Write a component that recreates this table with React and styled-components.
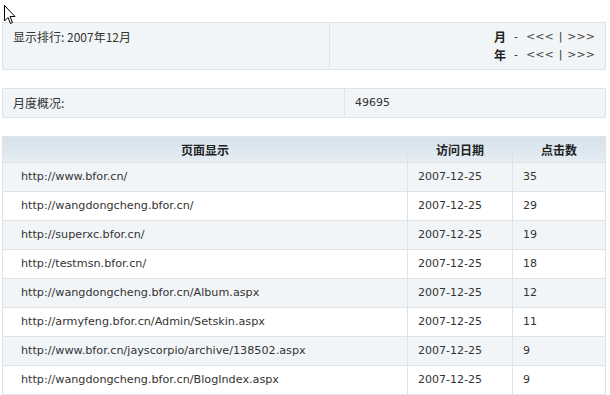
import React from 'react'
import styled, { createGlobalStyle } from 'styled-components'

const GlobalStyle = createGlobalStyle`
  html, body {
    margin: 0;
    padding: 0;
    background: #fff;
  }
  body {
    font-family: "DejaVu Sans", "Noto Sans CJK SC", sans-serif;
    font-size: 11px;
    line-height: 16px;
    color: #333;
  }
`

const Page = styled.div`
  position: relative;
  width: 604px;
  padding: 22px 0 0 2px;
  display: flex;
  flex-direction: column;
  gap: 18px;
`

const Cursor = styled.svg`
  position: absolute;
  left: 4px;
  top: 5px;
`

const InfoBox = styled.div`
  display: grid;
  grid-template-columns: ${props => props.split} 1fr;
  background: #f2f5f7;
  border: 1px solid #dfe3e6;
`

const InfoCell = styled.div`
  padding: ${props => props.pad || '5px 10px'};
  line-height: ${props => props.lh || '18px'};
  text-align: ${props => props.right ? 'right' : 'left'};
  border-left: ${props => props.divide ? '1px solid #dfe3e6' : 'none'};
`

const Cjk = styled.span`
  display: inline-block;
  vertical-align: top;
  font-family: "Noto Sans CJK SC", "DejaVu Sans", sans-serif;
  font-size: 12px;
  line-height: inherit;
`

const NavLine = styled.div`
  display: flex;
  justify-content: flex-end;
  align-items: center;
  gap: 8px;
  height: 18px;
`

const Label = styled.b`
  font-family: "Noto Sans CJK SC", sans-serif;
  font-size: 12px;
  line-height: 18px;
  font-weight: bold;
  color: #222;
`

const Links = styled.span`
  display: flex;
  gap: 5px;
`

const NavLink = styled.a`
  color: #444;
  text-decoration: none;
`

const Table = styled.table`
  width: 604px;
  border-collapse: collapse;
  table-layout: fixed;
  border: 1px solid #dfe3e6;
`

const Th = styled.th`
  height: 25px;
  padding: 0;
  font-family: "Noto Sans CJK SC", sans-serif;
  font-size: 12px;
  line-height: 16px;
  font-weight: bold;
  color: #222;
  text-align: center;
  background: linear-gradient(#d5e1eb, #e7eef4);
  border-left: 1px solid #dfe3e6;
  border-bottom: 1px solid #dfe3e6;
`

const Tr = styled.tr`
  background: ${props => props.alt ? '#f2f5f7' : '#fff'};
`

const Td = styled.td`
  height: 28px;
  padding: 0 0 0 ${props => props.indent || '10px'};
  border-left: 1px solid #dfe3e6;
  border-bottom: 1px solid #dfe3e6;
  white-space: nowrap;
  font-size: ${props => props.wide ? '11.2px' : '11px'};
`

const rows = [
  ['http://www.bfor.cn/', '2007-12-25', 35],
  ['http://wangdongcheng.bfor.cn/', '2007-12-25', 29],
  ['http://superxc.bfor.cn/', '2007-12-25', 19],
  ['http://testmsn.bfor.cn/', '2007-12-25', 18],
  ['http://wangdongcheng.bfor.cn/Album.aspx', '2007-12-25', 12],
  ['http://armyfeng.bfor.cn/Admin/Setskin.aspx', '2007-12-25', 11],
  ['http://www.bfor.cn/jayscorpio/archive/138502.aspx', '2007-12-25', 9],
  ['http://wangdongcheng.bfor.cn/BlogIndex.aspx', '2007-12-25', 9],
]

function Nav({ label }) {
  return (
    <NavLine>
      <Label>{label}</Label>
      <span>-</span>
      <Links>
        <NavLink href="#">&lt;&lt;&lt;</NavLink>
        <span>|</span>
        <NavLink href="#">&gt;&gt;&gt;</NavLink>
      </Links>
    </NavLine>
  )
}

export default function App() {
  return (
    <>
      <GlobalStyle />
      <Page>
        <Cursor width="12" height="20" viewBox="0 0 12 20">
          <path d="M0.5 0.5 L0.5 16 L4 12.5 L6.5 18.5 L8.5 17.5 L6 11.5 L11 11.5 Z" fill="#fff" stroke="#000" strokeWidth="1" />
        </Cursor>

        <InfoBox split="326px">
          <InfoCell><Cjk>显示排行: 2007年12月</Cjk></InfoCell>
          <InfoCell right divide>
            <Nav label="月" />
            <Nav label="年" />
          </InfoCell>
        </InfoBox>

        <InfoBox split="341px">
          <InfoCell pad="7px 10px" lh="14px"><Cjk>月度概况:</Cjk></InfoCell>
          <InfoCell pad="7px 10px" lh="14px" divide>49695</InfoCell>
        </InfoBox>

        <Table>
          <colgroup>
            <col style={{ width: 405 }} />
            <col style={{ width: 105 }} />
            <col />
          </colgroup>
          <thead>
            <tr>
              <Th>页面显示</Th>
              <Th>访问日期</Th>
              <Th>点击数</Th>
            </tr>
          </thead>
          <tbody>
            {rows.map(([url, date, hits], i) => (
              <Tr key={url} alt={i % 2 === 0}>
                <Td indent="18px" wide>{url}</Td>
                <Td>{date}</Td>
                <Td>{hits}</Td>
              </Tr>
            ))}
          </tbody>
        </Table>
      </Page>
    </>
  )
}
